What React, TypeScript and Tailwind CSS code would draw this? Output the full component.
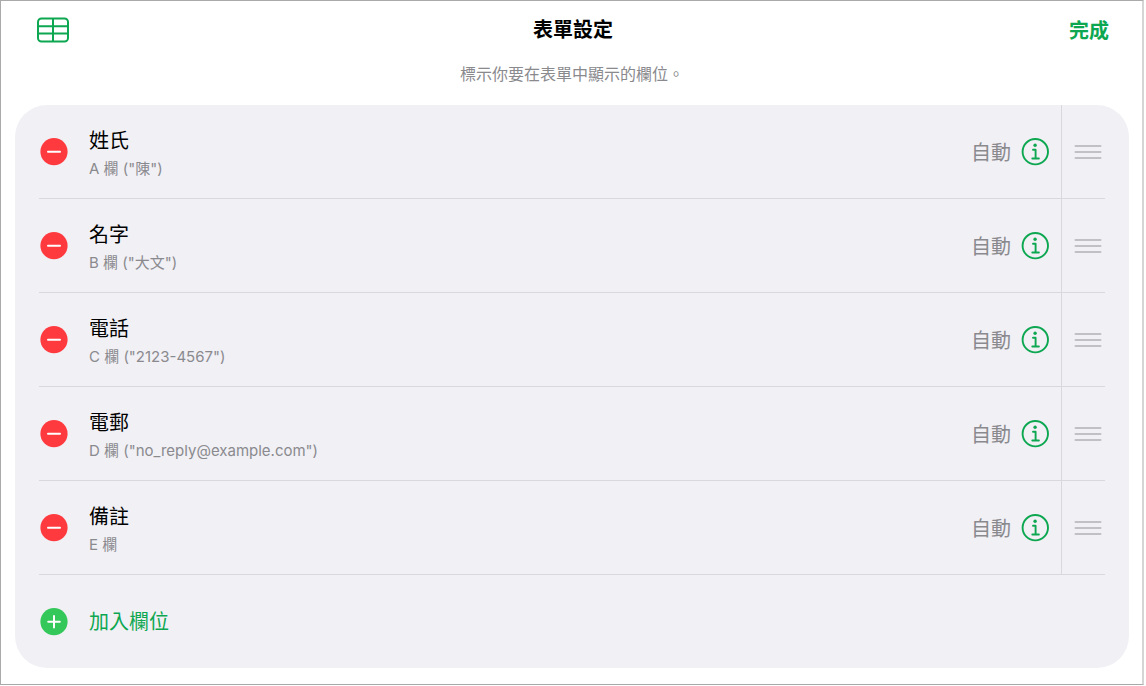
import React from "react";

interface Field {
    name: string;
    detail: string;
}

const fields: Field[] = [
    { name: "姓氏", detail: 'A 欄 ("陳")' },
    { name: "名字", detail: 'B 欄 ("大文")' },
    { name: "電話", detail: 'C 欄 ("2123-4567")' },
    { name: "電郵", detail: 'D 欄 ("no_reply@example.com")' },
    { name: "備註", detail: "E 欄" },
];

const TableIcon = () => (
    <svg width="32" height="26" viewBox="0 0 32 26" fill="none" stroke="#0ca750" strokeWidth="2">
        <rect x="1" y="1.5" width="30" height="23" rx="3.5" />
        <path d="M1 9.2h30M1 16.6h30M16 1.5v23" />
    </svg>
);

const RemoveIcon = () => (
    <svg width="28" height="28" viewBox="0 0 28 28">
        <circle cx="14" cy="13.7" r="13.6" fill="#ff3a3f" />
        <path d="M8 13.7h12" stroke="#fff" strokeWidth="2" strokeLinecap="round" />
    </svg>
);

const AddIcon = () => (
    <svg width="28" height="28" viewBox="0 0 28 28">
        <circle cx="14" cy="13.7" r="13.6" fill="#34c759" />
        <path d="M8.2 13.7h11.6M14 7.9v11.6" stroke="#fff" strokeWidth="2" strokeLinecap="round" />
    </svg>
);

const InfoIcon = () => (
    <svg width="28" height="28" viewBox="0 0 28 28" fill="none" stroke="#0ca750">
        <circle cx="14.3" cy="13.7" r="12.7" strokeWidth="1.9" />
        <circle cx="14.1" cy="7.3" r="1.7" fill="#0ca750" stroke="none" />
        <path d="M12 11.8h2.6v8.6M11.3 20.5h6.6" strokeWidth="1.9" strokeLinecap="round" strokeLinejoin="round" />
    </svg>
);

const HandleIcon = () => (
    <svg width="28" height="16" viewBox="0 0 28 16" stroke="#c1c1c5" strokeWidth="2" strokeLinecap="round">
        <path d="M1.5 2h25M1.5 8h25M1.5 14h25" />
    </svg>
);

const FieldRow: React.FC<{ field: Field }> = ({ field }) => {
    return (
        <li className="flex h-[94px] border-b border-[#d9d9dd]">
            <div className="flex flex-1 items-center border-r border-[#d9d9dd] pr-3 pl-px">
                <button type="button" aria-label={`移除${field.name}`}>
                    <RemoveIcon />
                </button>
                <div className="ml-[21px] flex-1 pt-1.5">
                    <div className="text-[20px] leading-[28px] text-black">{field.name}</div>
                    <div className="text-[15px] leading-[28px] text-[#8a8a8e]">{field.detail}</div>
                </div>
                <span className="mr-2.5 pt-0.5 text-[20px] leading-[28px] text-[#8a8a8e]">自動</span>
                <button type="button" aria-label={`${field.name}格式`}>
                    <InfoIcon />
                </button>
            </div>
            <button type="button" className="pr-[3px] pl-3" aria-label={`移動${field.name}`}>
                <HandleIcon />
            </button>
        </li>
    );
};

const App: React.FC = () => {
    return (
        <main className="mr-[2px] mb-px border border-r-2 border-[#aaaaaa] border-r-[#d5d5d5] bg-white pr-[13px] pb-4 pl-[14px] font-['Inter','Noto_Sans_CJK_TC',sans-serif]">
            <header className="grid h-[58px] grid-cols-3 items-center pr-5 pl-[22px]">
                <button type="button" className="justify-self-start" aria-label="表格">
                    <TableIcon />
                </button>
                <h1 className="justify-self-center text-[20px] leading-[28px] font-bold text-black">表單設定</h1>
                <button type="button" className="justify-self-end pt-0.5 text-[20px] leading-[28px] font-bold text-[#0ca750]">
                    完成
                </button>
            </header>
            <p className="h-[46px] pt-px text-center text-[16px] leading-[28px] text-[#8a8a8e]">標示你要在表單中顯示的欄位。</p>

            <section className="rounded-[32px] bg-[#f1f0f5] px-6">
                <ul>
                    {fields.map((field) => (
                        <FieldRow key={field.name} field={field} />
                    ))}
                </ul>
                <button type="button" className="flex h-[93px] w-full items-center gap-[21px] pl-px text-[20px] leading-[28px] text-[#0ca750]">
                    <AddIcon />
                    加入欄位
                </button>
            </section>
        </main>
    );
};

export default App;
